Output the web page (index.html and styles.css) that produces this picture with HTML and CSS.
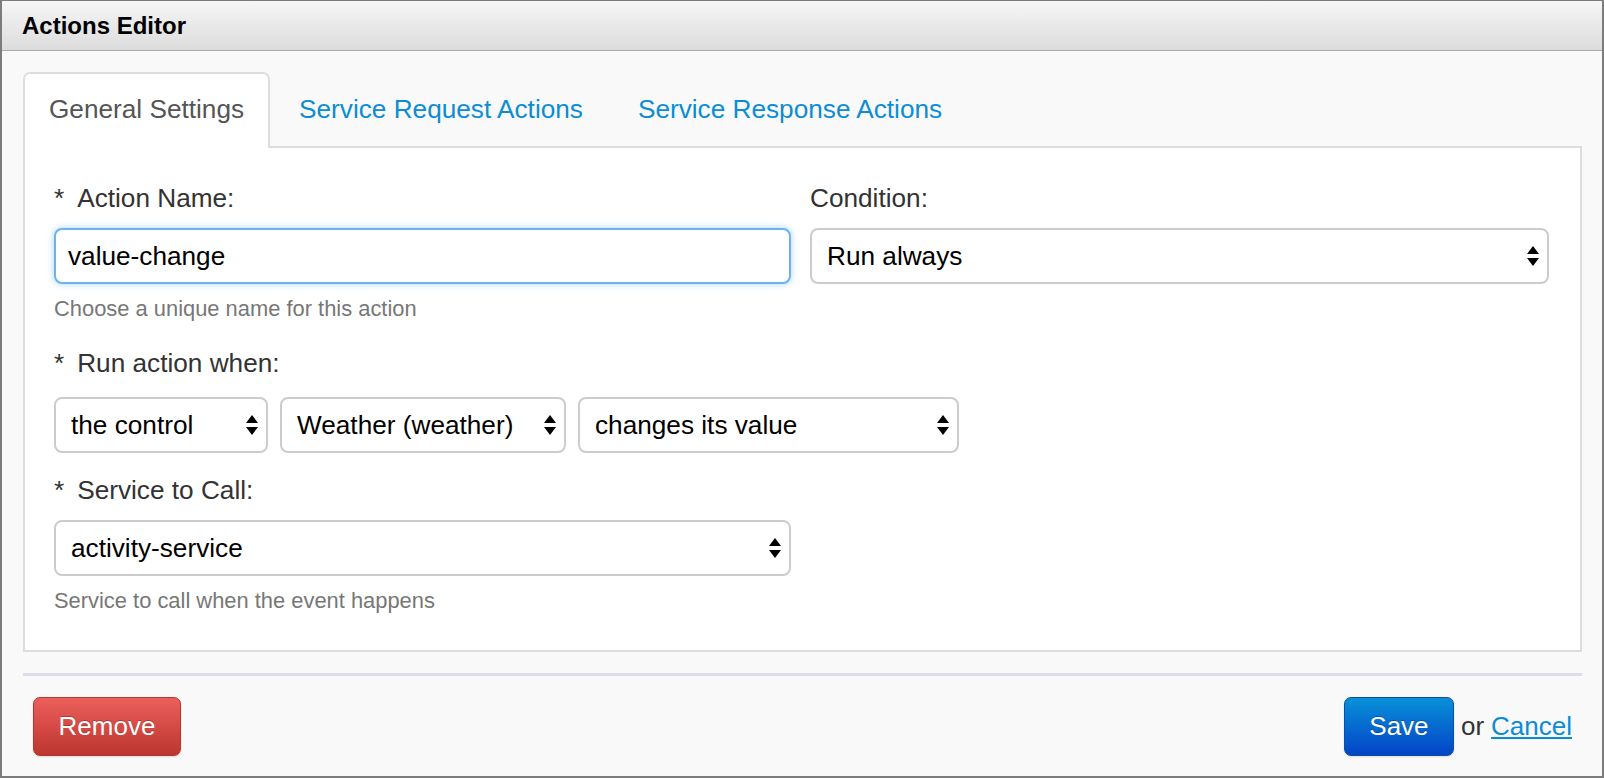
FILE: index.html
```html
<!DOCTYPE html>
<html lang="en">
<head>
<meta charset="utf-8">
<title>Actions Editor</title>
<link rel="stylesheet" href="styles.css">
</head>
<body>
<div class="window">
  <div class="titlebar">Actions Editor</div>
  <div class="content">
    <div class="tabs">
      <div class="tab active">General Settings</div>
      <div class="tab">Service Request Actions</div>
      <div class="tab">Service Response Actions</div>
    </div>
    <div class="panel">
      <div class="row">
        <div class="group">
          <div class="label"><span class="req">*</span>Action Name:</div>
          <div class="input focus">value-change</div>
          <div class="help">Choose a unique name for this action</div>
        </div>
        <div class="group">
          <div class="label">Condition:</div>
          <div class="select full"><span>Run always</span><svg class="arrows" width="12" height="20" viewBox="0 0 12 20"><path d="M0 8 L6 0 L12 8 Z M0 12 L12 12 L6 20 Z" fill="#000"/></svg></div>
        </div>
      </div>
      <div class="group spaced">
        <div class="label"><span class="req">*</span>Run action when:</div>
        <div class="selects">
          <div class="select w1"><span>the control</span><svg class="arrows" width="12" height="20" viewBox="0 0 12 20"><path d="M0 8 L6 0 L12 8 Z M0 12 L12 12 L6 20 Z" fill="#000"/></svg></div>
          <div class="select w2"><span>Weather (weather)</span><svg class="arrows" width="12" height="20" viewBox="0 0 12 20"><path d="M0 8 L6 0 L12 8 Z M0 12 L12 12 L6 20 Z" fill="#000"/></svg></div>
          <div class="select w3"><span>changes its value</span><svg class="arrows" width="12" height="20" viewBox="0 0 12 20"><path d="M0 8 L6 0 L12 8 Z M0 12 L12 12 L6 20 Z" fill="#000"/></svg></div>
        </div>
      </div>
      <div class="group spaced2">
        <div class="label"><span class="req">*</span>Service to Call:</div>
        <div class="select half"><span>activity-service</span><svg class="arrows" width="12" height="20" viewBox="0 0 12 20"><path d="M0 8 L6 0 L12 8 Z M0 12 L12 12 L6 20 Z" fill="#000"/></svg></div>
        <div class="help">Service to call when the event happens</div>
      </div>
    </div>
    <div class="footer">
      <button class="btn btn-danger">Remove</button>
      <div class="actions">
        <button class="btn btn-primary">Save</button>
        <span class="or">or</span>
        <a class="cancel" href="#">Cancel</a>
      </div>
    </div>
  </div>
</div>
</body>
</html>
```

FILE: styles.css
```css
html, body {
  margin: 0;
  padding: 0;
}
body {
  font-family: "Liberation Sans", Arial, Helvetica, sans-serif;
  color: #333;
}
.window {
  box-sizing: border-box;
  width: 1604px;
  height: 778px;
  border: 2px solid #7c7c7c;
  border-top-width: 1px;
  background: #f9f9f9;
  overflow: hidden;
}
.titlebar {
  box-sizing: border-box;
  height: 50px;
  border-bottom: 1px solid #acacac;
  background: linear-gradient(#f6f6f6, #dcdcdc);
  display: flex;
  align-items: center;
  padding-left: 20px;
  font-weight: bold;
  font-size: 24px;
  color: #000;
}
.content {
  padding: 21px 20px 0 21px;
}
.tabs {
  display: flex;
  position: relative;
  z-index: 1;
}
.tab {
  border: 2px solid transparent;
  border-bottom: 0;
  border-radius: 7px 7px 0 0;
  padding: 0 24px 4px;
  margin-right: 3px;
  margin-bottom: -2px;
  line-height: 70px;
  font-size: 26.2px;
  color: #0b8dd5;
}
.tab.active {
  background: #fff;
  border-color: #dddddd;
  color: #555;
}
.panel {
  background: #fff;
  border: 2px solid #dddddd;
  padding: 32px 31px 33px 29px;
}
.row {
  display: grid;
  grid-template-columns: 737px 1fr;
  column-gap: 19px;
}
.label {
  font-size: 26.2px;
  line-height: 36px;
  color: #333;
  margin-bottom: 12px;
}
.req {
  margin-right: 13px;
}
.input, .select {
  box-sizing: border-box;
  height: 56px;
  border: 2px solid #cccccc;
  border-radius: 8px;
  background: #fff;
  font-size: 26.2px;
  color: #000;
  display: flex;
  align-items: center;
}
.input {
  padding-left: 12px;
}
.input.focus {
  border-color: #6eb2ea;
  box-shadow: 0 0 7px rgba(102, 175, 233, 0.55);
}
.select {
  padding: 0 8px 0 15px;
  justify-content: space-between;
}
.select.full {
  width: 100%;
}
.select.half {
  width: 737px;
}
.arrows {
  flex: none;
}
.help {
  font-size: 21.9px;
  line-height: 32px;
  color: #777;
  margin-top: 9px;
}
.spaced {
  margin-top: 20px;
}
.spaced .label {
  margin-bottom: 16px;
}
.spaced2 {
  margin-top: 19px;
}
.selects {
  display: flex;
  gap: 12px;
}
.w1 { width: 214px; }
.w2 { width: 286px; }
.w3 { width: 381px; }
.footer {
  margin-top: 21px;
  border-top: 3px solid #dddded;
  padding: 21px 10px 0;
  display: flex;
  justify-content: space-between;
  align-items: center;
}
.btn {
  box-sizing: border-box;
  height: 59px;
  padding: 0 24px;
  border-radius: 7px;
  font-family: inherit;
  font-size: 26px;
  color: #fff;
  text-shadow: 0 -1px 0 rgba(0, 0, 0, 0.25);
  box-shadow: 0 1px 2px rgba(0, 0, 0, 0.12);
  cursor: pointer;
}
.btn-danger {
  width: 148px;
  background: linear-gradient(#ec5f5c, #bd362f);
  border: 1px solid #b3362f;
}
.btn-primary {
  width: 110px;
  background: linear-gradient(#0890d8, #0344c8);
  border: 1px solid #0c4ea2;
}
.actions {
  display: flex;
  align-items: center;
}
.or {
  font-size: 26px;
  color: #333;
  margin: 0 7px 0 7px;
}
.cancel {
  font-size: 26px;
  color: #0b8dd5;
  text-decoration: underline;
}
```
